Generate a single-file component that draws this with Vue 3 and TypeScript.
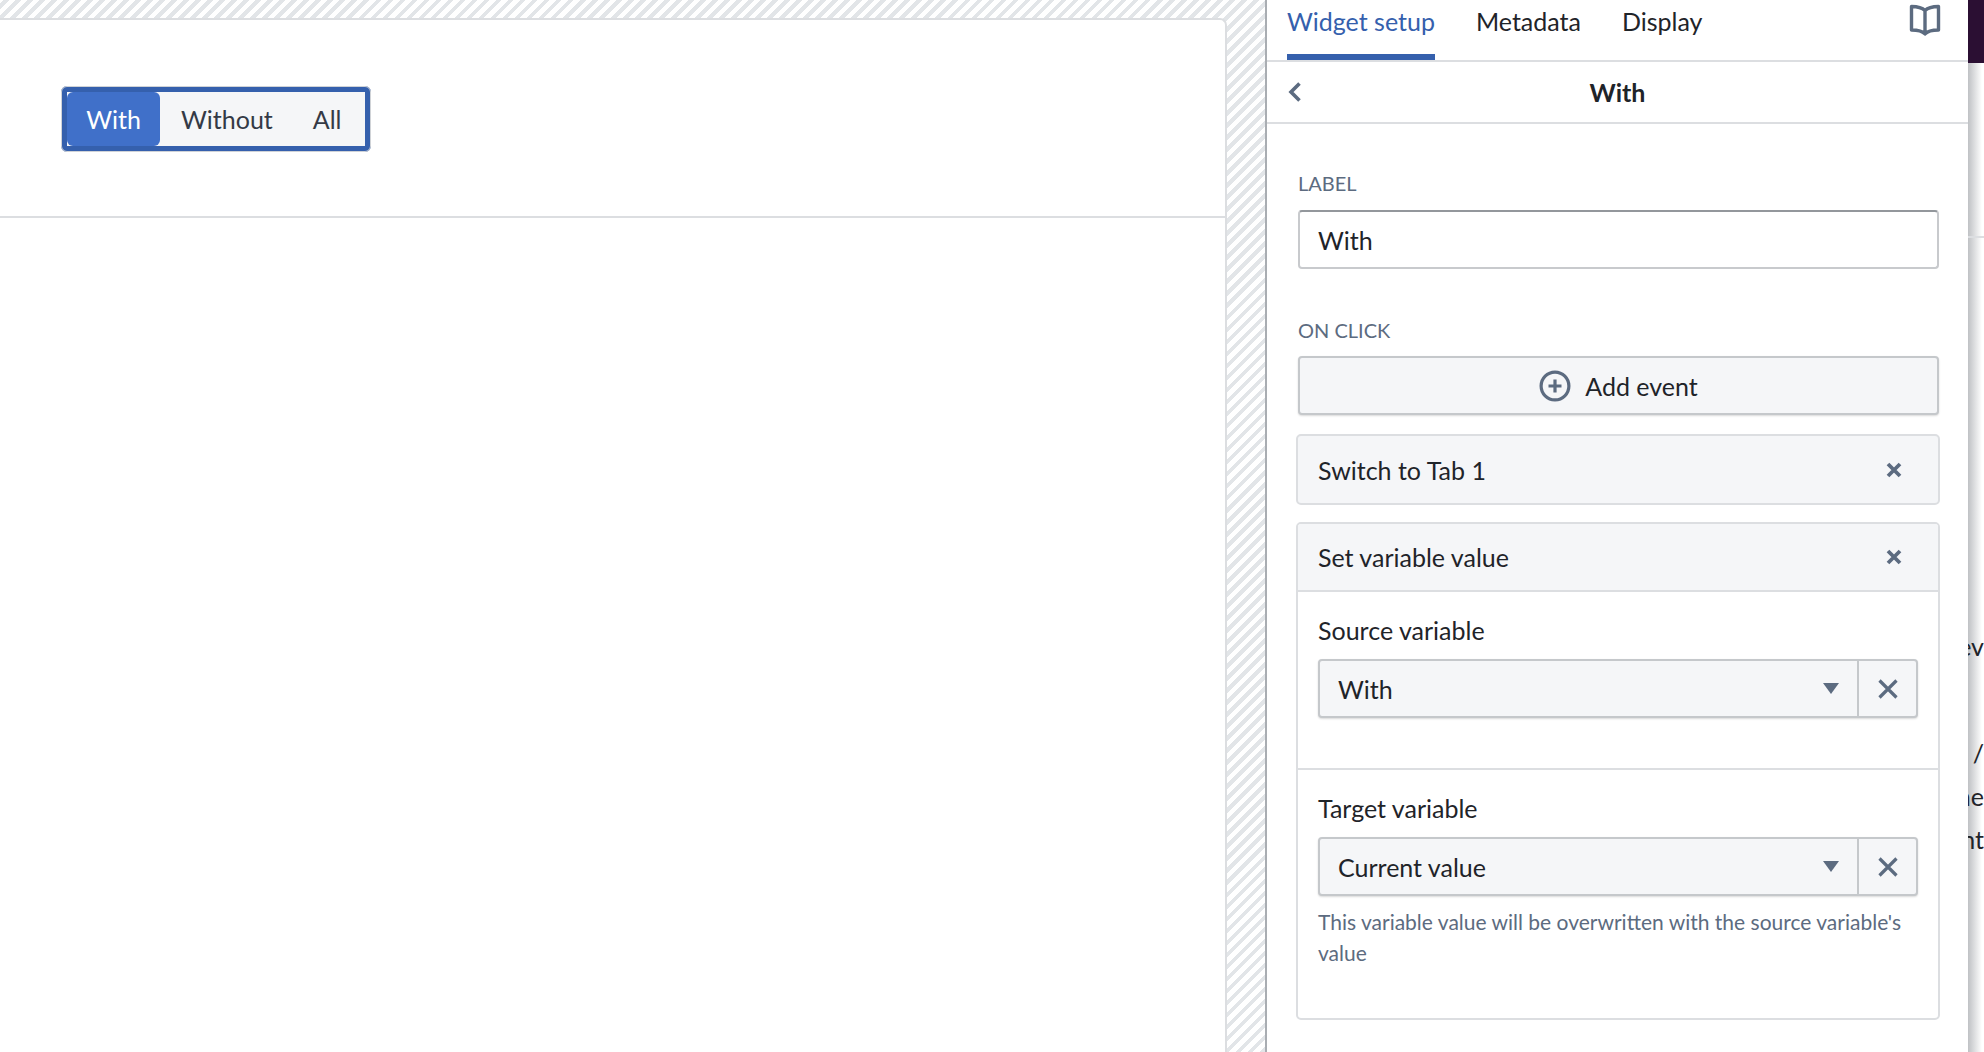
<script setup lang="ts">
const tabs: string[] = ['Metadata', 'Display']
const pageLines = [
  { t: 'ev', y: 'a' },
  { t: '/', y: 'b' },
  { t: 'ne', y: 'c' },
  { t: 'nt', y: 'd' },
]
</script>

<template>
  <div class="root">
    <section class="canvas">
      <div class="card">
        <div class="card-top">
          <div class="seg">
            <div class="seg-item active">With</div>
            <div class="seg-item without">Without</div>
            <div class="seg-item all">All</div>
          </div>
        </div>
      </div>
    </section>

    <aside class="panel">
      <nav class="tabs">
        <div class="tab current">Widget setup</div>
        <div v-for="t in tabs" :key="t" class="tab">{{ t }}</div>
        <svg class="book" viewBox="0 0 32 32" fill="none" stroke="#5c6b80" stroke-width="3.4" stroke-linejoin="round">
          <path d="M16 6.5C13 3.5 8 2.5 2.5 2.5v23.500C8 26 13 26.500 16 30c3-3.500 8-4 13.500-4V2.500C24 2.500 19 3.500 16 6.500zM16 6.500V29" />
        </svg>
      </nav>

      <header class="subhead">
        <svg class="back" viewBox="0 0 14 20" fill="none" stroke="#5c6b80" stroke-width="3.600">
          <path d="M11.500 1.500L3 10l8.500 8.500" />
        </svg>
        <span class="subtitle">With</span>
      </header>

      <div class="body">
        <label class="caps">LABEL</label>
        <div class="input">With</div>

        <label class="caps second">ON CLICK</label>
        <button class="add">
          <svg class="plus" viewBox="0 0 32 32" fill="none" stroke="#5c6b80" stroke-width="3.200">
            <circle cx="16" cy="16" r="13.900" />
            <path d="M16 9.500v13M9.500 16h13" />
          </svg>
          <span>Add event</span>
        </button>

        <div class="event">
          <div class="event-head">
            <span>Switch to Tab 1</span>
            <svg class="x" viewBox="0 0 16 16" stroke="#5c6b80" stroke-width="3.800"><path d="M2 2l12 12M14 2L2 14" /></svg>
          </div>
        </div>

        <div class="event open">
          <div class="event-head ruled">
            <span>Set variable value</span>
            <svg class="x" viewBox="0 0 16 16" stroke="#5c6b80" stroke-width="3.800"><path d="M2 2l12 12M14 2L2 14" /></svg>
          </div>

          <div class="field source">
            <div class="field-label">Source variable</div>
            <div class="select">
              <div class="select-main">
                <span>With</span>
                <svg class="caret" viewBox="0 0 16 11"><path d="M0 0h16L8 11z" fill="#5c6b80" /></svg>
              </div>
              <div class="select-clear">
                <svg class="x2" viewBox="0 0 20 20" stroke="#5c6b80" stroke-width="3.200"><path d="M1.500 1.500l17 17M18.500 1.500l-17 17" /></svg>
              </div>
            </div>
          </div>

          <div class="field target">
            <div class="field-label">Target variable</div>
            <div class="select">
              <div class="select-main">
                <span>Current value</span>
                <svg class="caret" viewBox="0 0 16 11"><path d="M0 0h16L8 11z" fill="#5c6b80" /></svg>
              </div>
              <div class="select-clear">
                <svg class="x2" viewBox="0 0 20 20" stroke="#5c6b80" stroke-width="3.200"><path d="M1.500 1.500l17 17M18.500 1.500l-17 17" /></svg>
              </div>
            </div>
            <p class="help">This variable value will be overwritten with the source variable's value</p>
          </div>
        </div>
      </div>
    </aside>

    <div class="page">
      <div class="page-bar"></div>
      <div class="page-top"></div>
      <div v-for="l in pageLines" :key="l.t" class="page-line" :class="l.y">{{ l.t }}</div>
    </div>
  </div>
</template>

<style>
html, body { margin: 0; overflow: hidden; background: #fff; }
</style>

<style scoped>
.root {
  display: flex;
  width: 1984px;
  height: 1052px;
  overflow: hidden;
  font-family: "Lato", "Noto Sans", sans-serif;
  color: #1f2429;
}
.canvas {
  width: 1267px;
  flex: none;
  box-sizing: border-box;
  padding: 18px 38px 0 0;
  border-right: 2px solid #a9adb2;
  background: repeating-linear-gradient(-45deg, #e2e5e8 0 4px, #fff 4px 8.500px);
}
.card {
  height: 100%;
  background: #fff;
  border-top: 2px solid #dcdee1;
  border-right: 2px solid #dcdee1;
  border-top-right-radius: 7px;
}
.card-top {
  height: 198px;
  box-sizing: border-box;
  border-bottom: 2px solid #dcdee1;
  padding: 66px 0 0 61px;
}
.seg {
  display: inline-flex;
  width: 310px;
  height: 66px;
  box-sizing: border-box;
  border: 6px solid #3560ad;
  outline: 1px solid #d0d3d7;
  outline-offset: -1px;
  border-radius: 6px;
  background: #f5f6f8;
  font-size: 25px;
  color: #343a46;
}
.seg-item { display: flex; align-items: center; height: 100%; }
.active {
  width: 93px;
  justify-content: center;
  background: #4070c9;
  color: #fff;
  border-radius: 6px;
}
.without { margin-left: 21px; }
.all { margin-left: 40px; }

.panel {
  width: 701px;
  flex: none;
  background: #fff;
  display: flex;
  flex-direction: column;
}
.tabs {
  display: flex;
  height: 62px;
  box-sizing: border-box;
  border-bottom: 2px solid #dcdee1;
  padding-left: 20px;
  gap: 41px;
  position: relative;
  font-size: 25px;
}
.tab { line-height: 42px; height: 60px; box-sizing: border-box; }
.current { color: #3560ad; border-bottom: 6px solid #3560ad; }
.book {
  width: 32px;
  height: 32px;
  margin: 4px 0 0 auto;
  margin-right: 27px;
}
.subhead {
  height: 62px;
  box-sizing: border-box;
  border-bottom: 2px solid #dcdee1;
  display: flex;
  align-items: center;
  justify-content: center;
  position: relative;
}
.back { position: absolute; left: 21px; top: 20px; width: 14px; height: 20px; }
.subtitle { font-size: 25px; font-weight: 700; }
.body { padding: 44px 29px 0 31px; }
.caps {
  display: block;
  font-size: 20px;
  line-height: 30px;
  color: #5c6b80;
}
.second { margin-top: 46px; }
.input {
  height: 59px;
  box-sizing: border-box;
  margin-top: 12px;
  border: 2px solid #c8cacd;
  border-top-color: #93979c;
  border-radius: 4px;
  padding-left: 18px;
  display: flex;
  align-items: center;
  font-size: 25px;
}
.add {
  width: 100%;
  height: 59px;
  margin-top: 11px;
  box-sizing: border-box;
  border: 2px solid #c5c8cb;
  border-radius: 4px;
  background: #f5f6f8;
  box-shadow: 0 1px 2px rgba(0, 0, 0, 0.15);
  display: flex;
  align-items: center;
  justify-content: center;
  gap: 14px;
  font: inherit;
  font-size: 25px;
  color: inherit;
  padding: 0;
}
.plus { width: 32px; height: 32px; }
.event {
  margin: 19px -1px 0 -2px;
  border: 2px solid #dcdee1;
  border-radius: 5px;
  background: #f5f6f8;
  font-size: 25px;
}
.event + .event { margin-top: 17px; }
.event-head {
  height: 67px;
  box-sizing: border-box;
  display: flex;
  align-items: center;
  justify-content: space-between;
  padding: 0 36px 0 20px;
}
.open { background: #fff; height: 498px; box-sizing: border-box; }
.open .event-head { background: #f5f6f8; border-radius: 3px 3px 0 0; height: 68px; }
.ruled { border-bottom: 2px solid #dcdee1; }
.x { width: 16px; height: 16px; }
.field { padding: 0 20px 0 20px; }
.source { height: 178px; box-sizing: border-box; border-bottom: 2px solid #dcdee1; padding-top: 22px; }
.target { padding-top: 22px; }
.field-label { line-height: 32px; }
.select {
  display: flex;
  height: 59px;
  box-sizing: border-box;
  margin-top: 13px;
  border: 2px solid #c5c8cb;
  border-radius: 4px;
  background: #f5f6f8;
  box-shadow: 0 1px 2px rgba(0, 0, 0, 0.15);
}
.select-main {
  flex: 1;
  display: flex;
  align-items: center;
  justify-content: space-between;
  padding: 0 18px;
  border-right: 2px solid #c5c8cb;
}
.select-clear {
  width: 57px;
  display: flex;
  align-items: center;
  justify-content: center;
}
.caret { width: 16px; height: 11px; }
.x2 { width: 20px; height: 20px; }
.help {
  margin: 10px 0 0;
  font-size: 21px;
  line-height: 31px;
  color: #5c6b80;
}

.page {
  width: 16px;
  flex: none;
  overflow: hidden;
  background: linear-gradient(90deg, #bfc1c4, #fff 14px);
  font-size: 25px;
  color: #1f2429;
}
.page-bar { height: 63px; background: #2b0f33; }
.page-top { height: 173px; border-bottom: 2px solid #dcdee1; box-sizing: content-box; }
.page-line { display: flex; justify-content: flex-end; white-space: nowrap; line-height: 43px; }
.page-line.a { margin-top: 387px; }
.page-line.b { margin-top: 64px; }
</style>
